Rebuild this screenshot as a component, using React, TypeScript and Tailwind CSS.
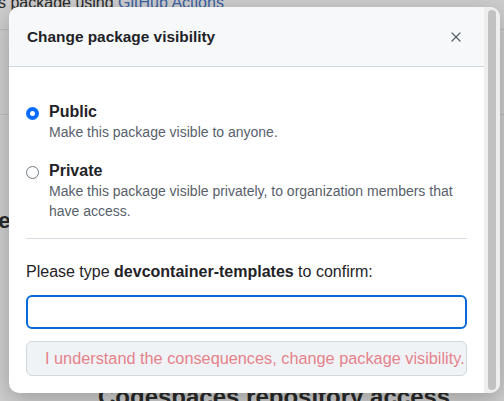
import { X } from "lucide-react";

function Radio({ checked }: { checked?: boolean }) {
  return checked ? (
    <span className="mt-[5px] flex h-[13px] w-[13px] shrink-0 items-center justify-center rounded-full bg-[#0a6cff]">
      <span className="h-[5px] w-[5px] rounded-full bg-white" />
    </span>
  ) : (
    <span className="mt-[5px] h-[13px] w-[13px] shrink-0 rounded-full border border-[#6e7781] bg-white" />
  );
}

export default function App() {
  return (
    <div
      className="relative h-[401px] w-[504px] overflow-hidden bg-[#cfcfcf] text-[#1f2328]"
      style={{ fontFamily: '"Liberation Sans", Arial, sans-serif' }}
    >
      {/* page behind the overlay */}
      <div className="flex flex-col text-[#2a2a2a]">
        <p className="-mt-[7px] -ml-[2px] whitespace-nowrap text-[16px] leading-[20px]">
          s package using <span className="text-[#3a62a4]">GitHub Actions</span>
        </p>
        <div className="mt-[16px] border-t border-[#bcbcbc]" />
        <div className="mt-[84px] border-t border-[#bcbcbc]" />
        <p className="mt-[94px] -ml-[14px] text-[22px] font-bold leading-[24px]">ce</p>
        <p className="mt-[150px] ml-[98px] whitespace-nowrap text-[24px] font-bold leading-[28px]">
          Codespaces repository access
        </p>
      </div>

      {/* dialog */}
      <div className="absolute left-[9px] top-[7px] flex h-[386px] w-[491px] overflow-hidden rounded-[10px] bg-white shadow-[0_6px_24px_rgba(0,0,0,0.25)]">
        <div className="flex w-[475px] flex-col">
          <div className="flex h-[60px] items-center justify-between border-b border-[#d0d7de] bg-[#f6f8fa] pl-[18px] pr-[20px]">
            <h2 className="text-[15.4px] font-bold">Change package visibility</h2>
            <X className="h-[16px] w-[16px] text-[#57606a]" strokeWidth={1.8} />
          </div>

          <div className="flex flex-col px-[17px] pt-[35px]">
            <div className="flex gap-[10px]">
              <Radio checked />
              <div className="flex flex-col">
                <span className="text-[16px] font-bold leading-[20px]">Public</span>
                <span className="text-[14px] leading-[20px] text-[#57606a]">
                  Make this package visible to anyone.
                </span>
              </div>
            </div>

            <div className="mt-[19px] flex gap-[10px]">
              <Radio />
              <div className="flex flex-col">
                <span className="text-[16px] font-bold leading-[20px]">Private</span>
                <span className="text-[14px] leading-[20px] text-[#57606a]">
                  Make this package visible privately, to organization members that have
                  access.
                </span>
              </div>
            </div>

            <div className="mt-[17px] border-t border-[#d8dee4]" />

            <p className="mt-[21px] text-[16px] leading-[24px]">
              Please type <b>devcontainer-templates</b> to confirm:
            </p>

            <input
              className="mt-[11px] h-[34px] w-full rounded-[6px] border-2 border-[#0969da] bg-white px-2 outline-none"
              type="text"
            />

            <button className="mt-[12px] flex h-[35px] w-full items-center overflow-hidden whitespace-nowrap rounded-[6px] border border-[#d0d7de] bg-[#f0f3f6] pl-[18px] text-[16.3px] text-[#e5828a]">
              I understand the consequences, change package visibility.
            </button>
          </div>
        </div>

        {/* scrollbar */}
        <div className="flex w-[16px] justify-center bg-[#eeeeee] py-[3px]">
          <div className="w-[8px] rounded-full bg-[#c1c1c1]" />
        </div>
      </div>
    </div>
  );
}
